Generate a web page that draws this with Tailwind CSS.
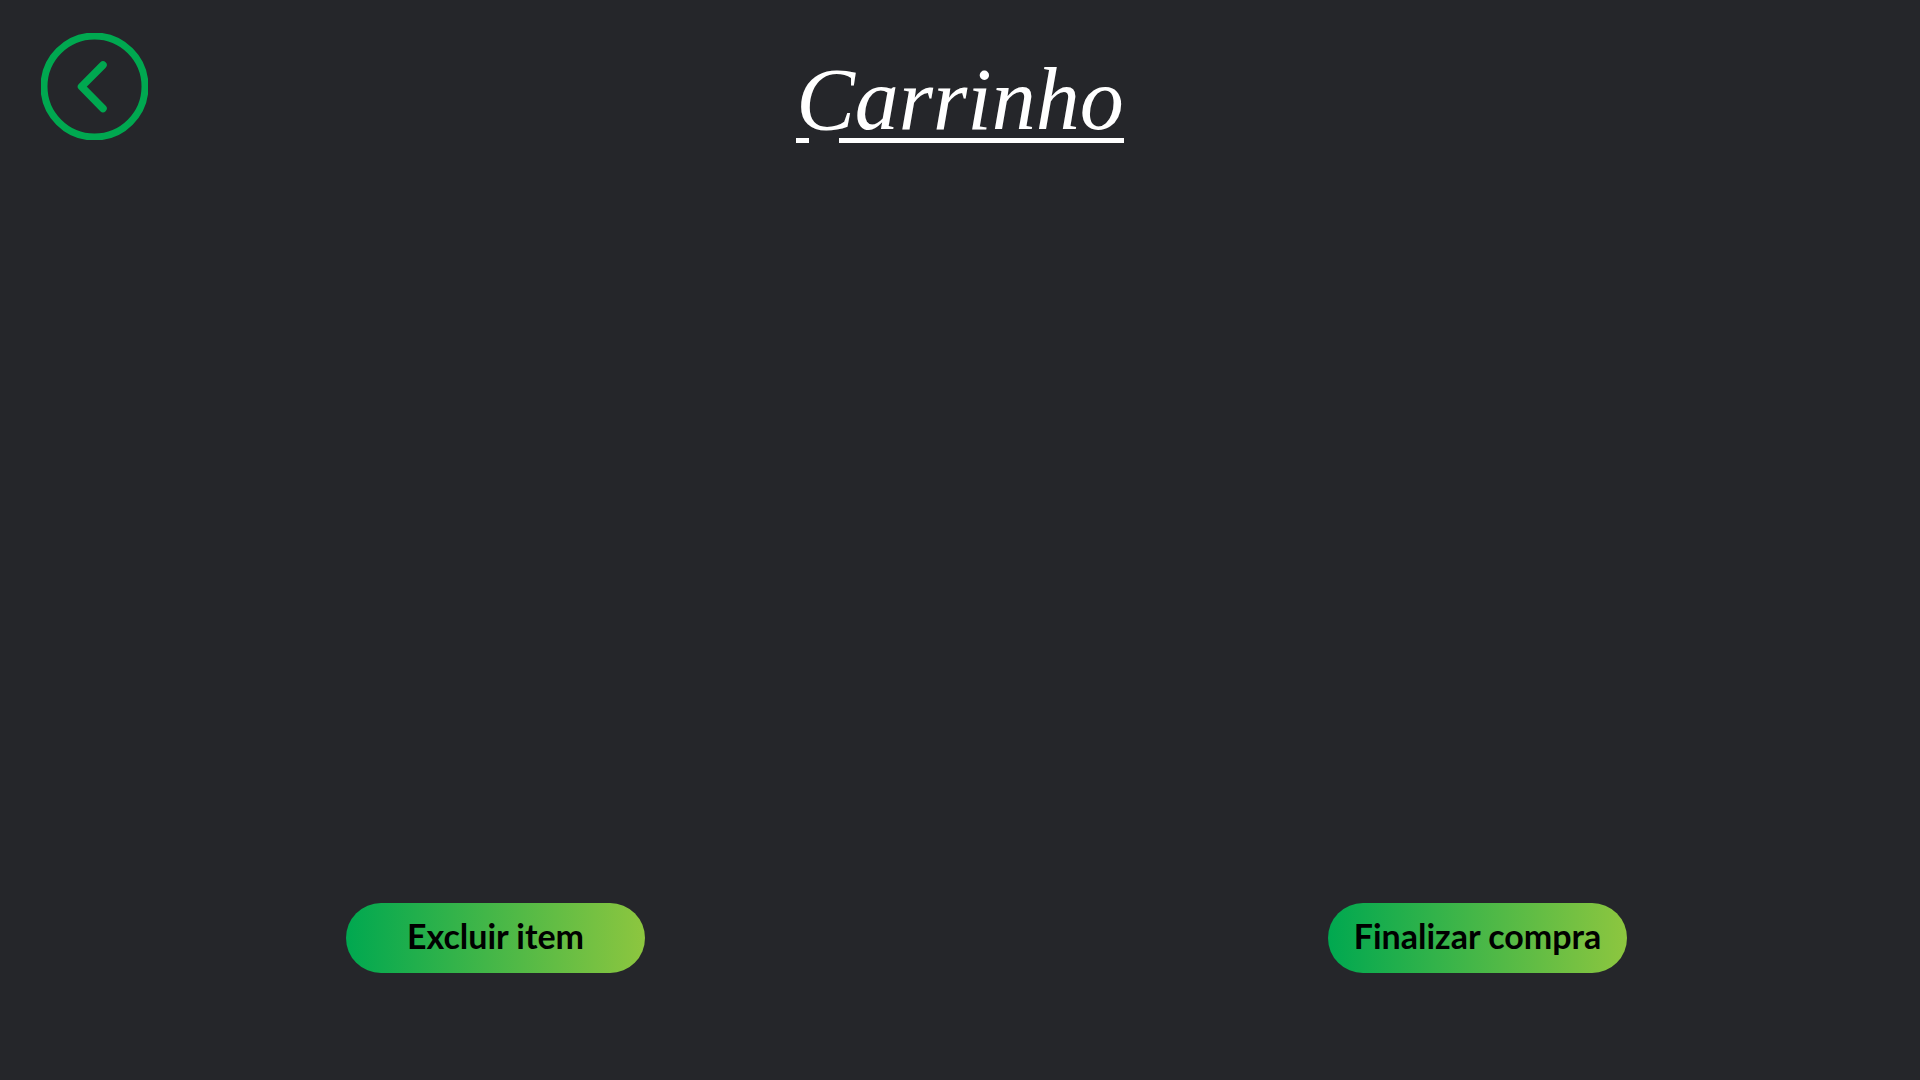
<!DOCTYPE html>
<html lang="pt-BR">
<head>
<meta charset="utf-8">
<meta name="viewport" content="width=device-width, initial-scale=1">
<title>Carrinho</title>
<script src="https://cdn.jsdelivr.net/npm/@tailwindcss/browser@4"></script>
</head>
<body class="flex min-h-screen flex-col bg-[#25262a] font-['Lato',sans-serif]">
<header class="grid grid-cols-[1fr_auto_1fr] items-start px-[41px] pt-[33px]">
  <button type="button" aria-label="Voltar" class="size-[107px] cursor-pointer">
    <svg viewBox="0 0 107 107" class="size-full" fill="none" stroke="#00a850" stroke-linecap="round" stroke-linejoin="round">
      <circle cx="53.5" cy="53.5" r="50.500" stroke-width="7"/>
      <path d="M62 32 40.500 53.700 62 75.500" stroke-width="7.500"/>
    </svg>
  </button>
  <h1 class="flex flex-col pt-[29px]">
    <span class="font-['Liberation_Serif',serif] text-[88px] leading-[76px] text-white italic">Carrinho</span>
    <span class="flex h-[5px] gap-[30px]" aria-hidden="true">
      <span class="w-[13px] bg-white"></span>
      <span class="flex-1 bg-white"></span>
    </span>
  </h1>
</header>
<main class="flex-1"></main>
<footer class="flex justify-between pr-[293px] pb-[107px] pl-[346px]">
  <button type="button" class="h-[70px] w-[299px] cursor-pointer rounded-full bg-linear-to-r/srgb from-[#00a850] to-[#8dc63f] pb-1 text-[34px] leading-10 font-bold whitespace-nowrap text-black">Excluir item</button>
  <button type="button" class="h-[70px] w-[299px] cursor-pointer rounded-full bg-linear-to-r/srgb from-[#00a850] to-[#8dc63f] pb-1 text-[34px] leading-10 font-bold whitespace-nowrap text-black">Finalizar compra</button>
</footer>
</body>
</html>
